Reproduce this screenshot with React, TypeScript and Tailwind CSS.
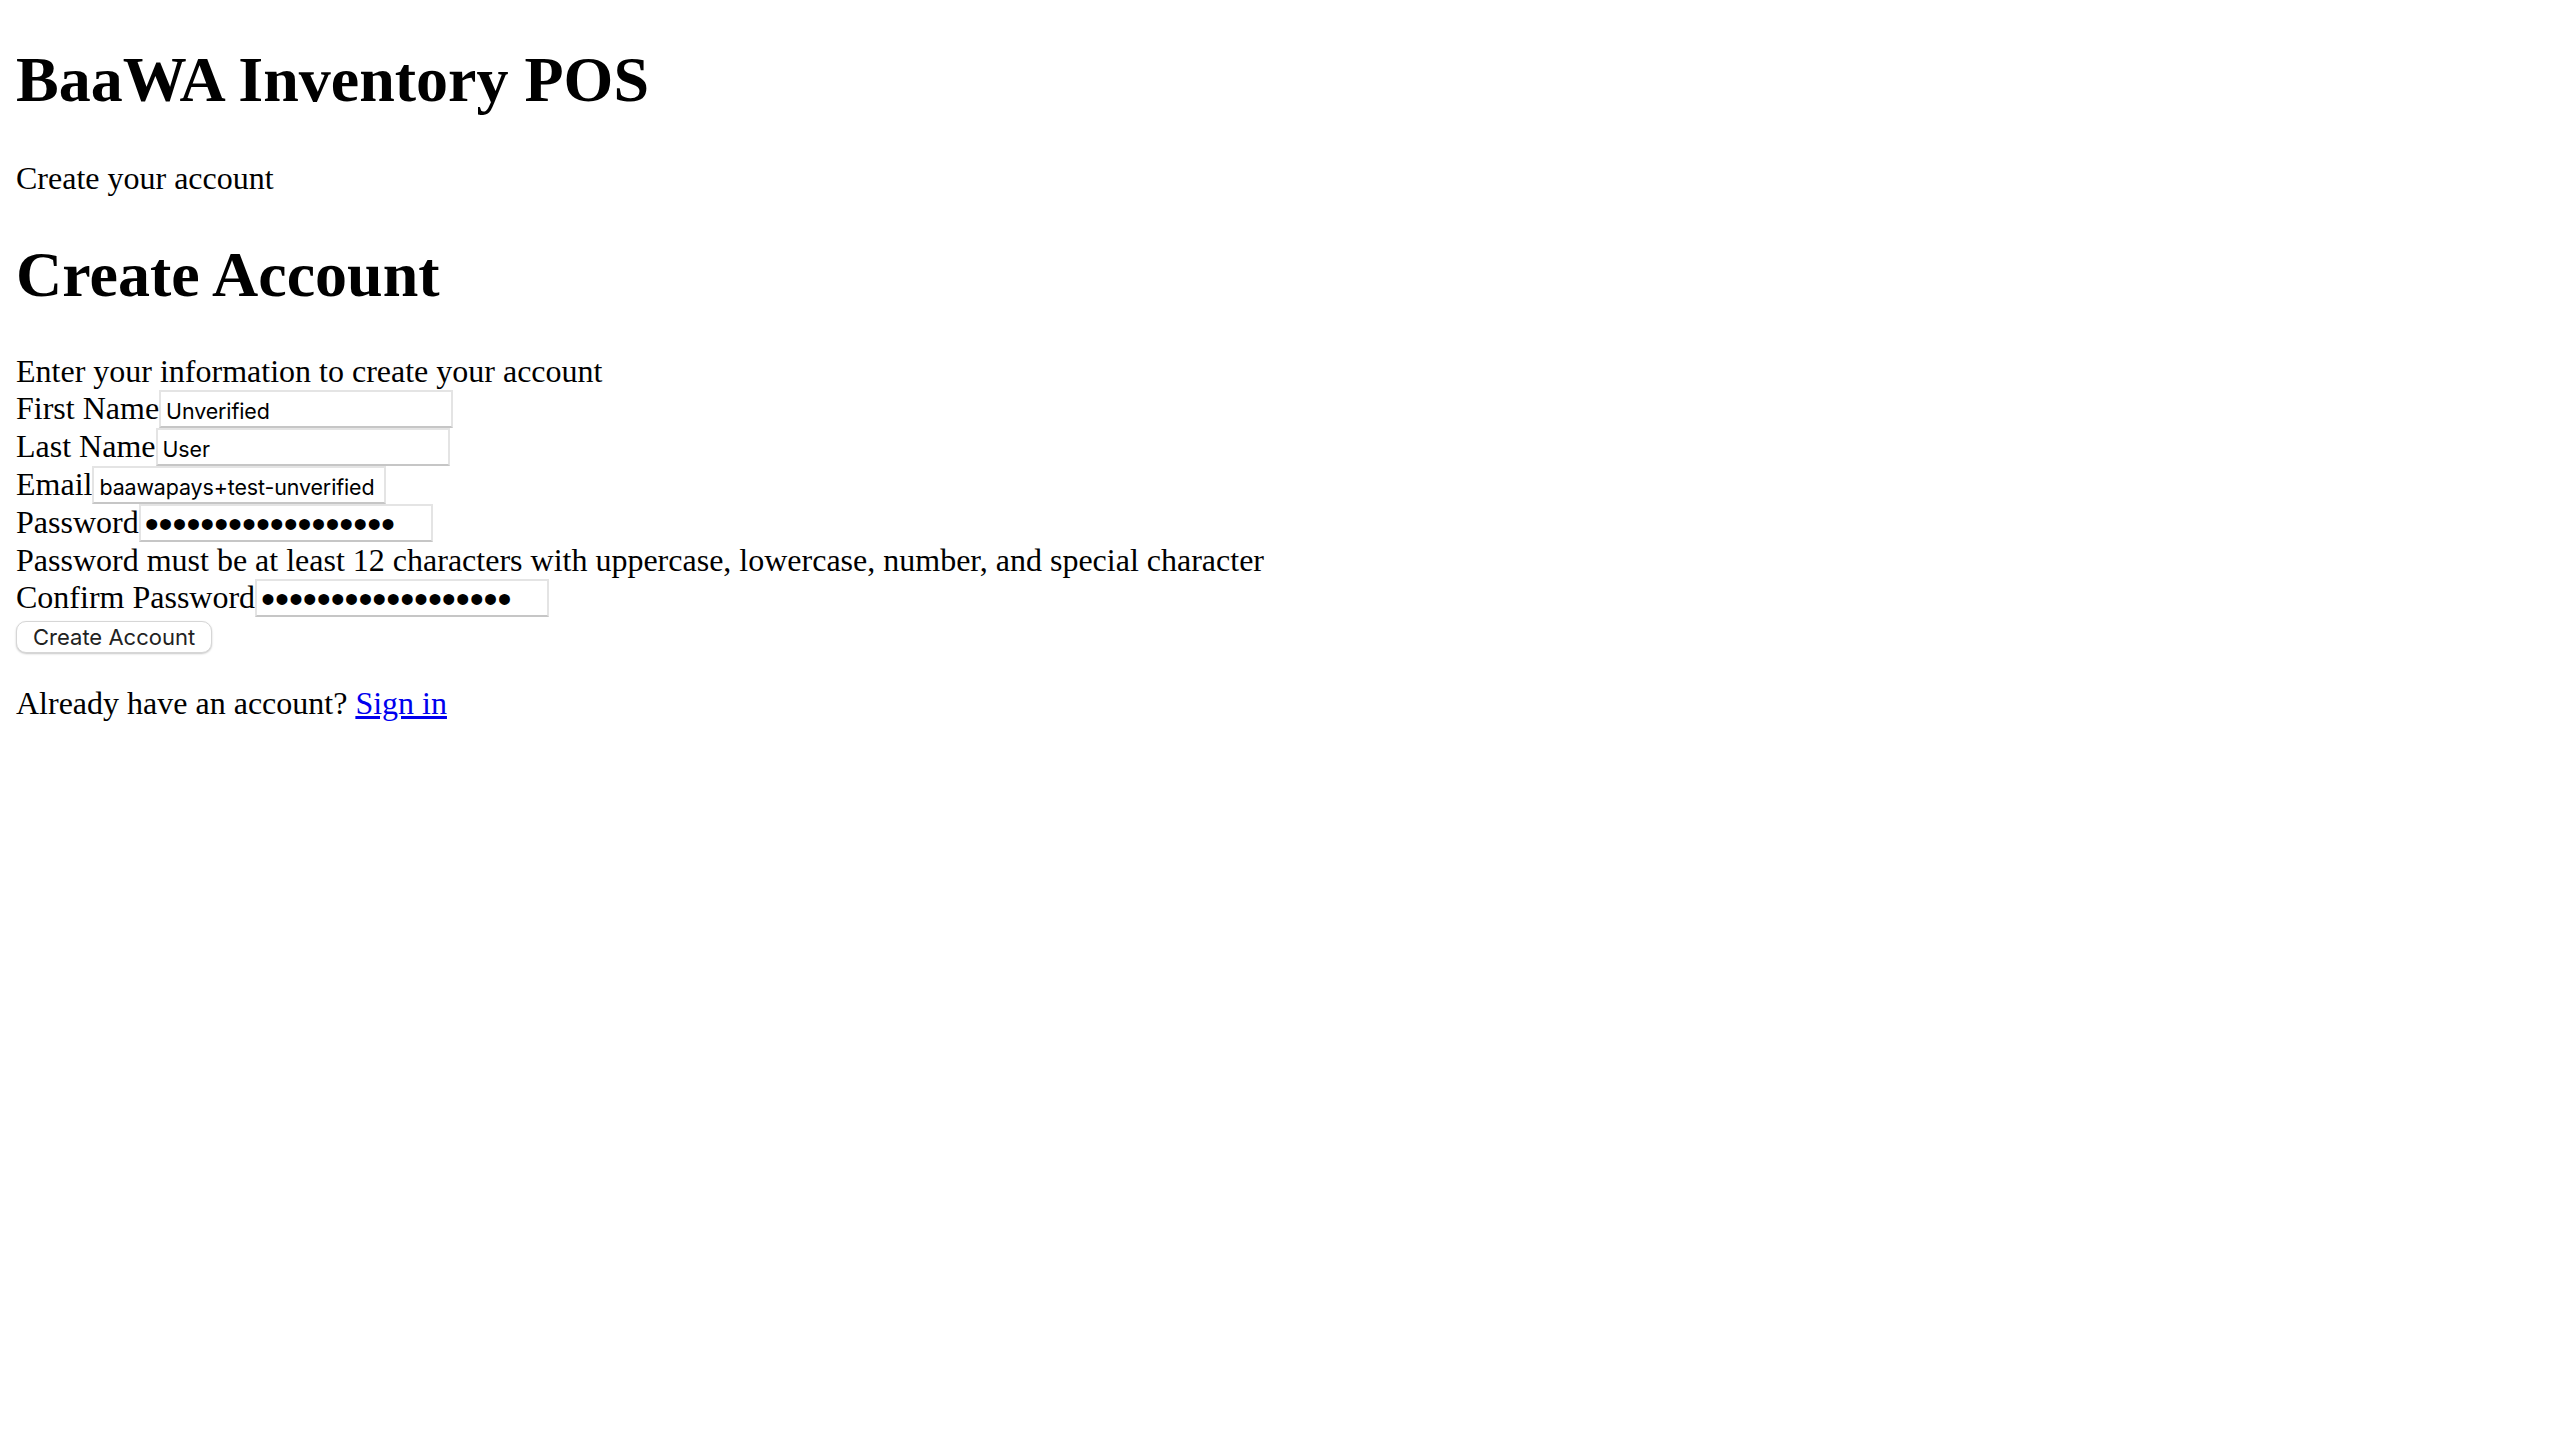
import React from "react";

const inputCls =
  "box-border h-[38px] w-[294px] border-[2px] border-[#e4e4e4] border-b-[#c6c6c6] bg-white pl-[5px] pr-[4px] pt-[3px] pb-0 font-['Inter',sans-serif] text-[21.4px] tracking-[-0.1px] leading-[normal] text-black outline-none";

const pwCls =
  "box-border h-[38px] w-[294px] border-[2px] border-[#e4e4e4] border-b-[#c6c6c6] bg-white pl-[4px] pr-[4px] pt-[2px] pb-0 font-['Liberation_Sans',sans-serif] text-[40px] tracking-[-0.1px] leading-[normal] text-black outline-none";

function Row({ label, children }: { label: string; children: React.ReactNode }) {
  return (
    <div className="flex h-[38px] items-start">
      <label className="whitespace-pre">{label}</label>
      {children}
    </div>
  );
}

export default function App() {
  return (
    <div className="min-h-[1440px] bg-white px-[16px] font-['Liberation_Serif',serif] text-[32px] leading-[normal] text-black">
      <h1 className="mt-[42.88px] mb-[42.88px] text-[64px] font-bold leading-[normal]">BaaWA Inventory POS</h1>
      <p className="my-[32px]">Create your account</p>
      <h1 className="mt-[41.5px] mb-[41px] text-[64px] font-bold leading-[normal]">Create Account</h1>
      <div>Enter your information to create your account</div>
      <form onSubmit={(e) => e.preventDefault()}>
        <Row label="First Name">
          <input className={inputCls} type="text" defaultValue="Unverified" />
        </Row>
        <Row label="Last Name">
          <input className={inputCls} type="text" defaultValue="User" />
        </Row>
        <Row label="Email">
          <input className={inputCls} type="text" defaultValue="baawapays+test-unverified" />
        </Row>
        <Row label="Password">
          <input className={pwCls} type="password" defaultValue="Abcdefgh1234!@#xyz" />
        </Row>
        <div>Password must be at least 12 characters with uppercase, lowercase, number, and special character</div>
        <Row label="Confirm Password">
          <input className={pwCls} type="password" defaultValue="Abcdefgh1234!@#xyz" />
        </Row>
        <button
          type="submit"
          className="mt-[4px] mb-[3.5px] block h-[32px] rounded-[10px] border-[1px] border-[#d6d6d6] bg-white px-[16px] font-['Inter',sans-serif] text-[22px] leading-[normal] text-[#222222] shadow-[0_1px_2px_rgba(0,0,0,0.22)]"
        >
          Create Account
        </button>
      </form>
      <p className="my-[32px]">
        Already have an account?{" "}
        <a href="#" className="text-[#0000ee] underline">
          Sign in
        </a>
      </p>
    </div>
  );
}
